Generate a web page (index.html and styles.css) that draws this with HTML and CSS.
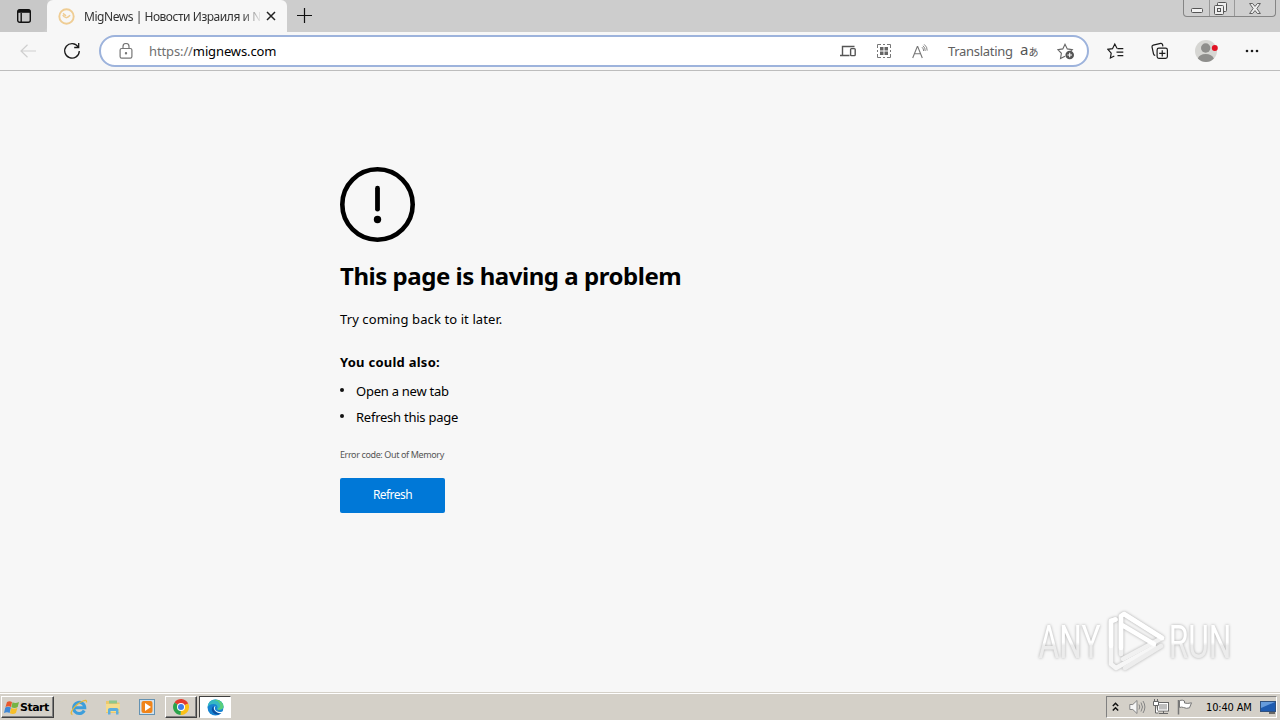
FILE: index.html
```
<!DOCTYPE html>
<html lang="en">
<head>
  <meta charset="UTF-8" />
  <title>MigNews</title>
  <link rel="stylesheet" href="styles.css">
</head>
<body>
  <header class="tabstrip">
    <div class="tab-menu">
      <svg width="16" height="16" viewBox="0 0 16 16" fill="none" stroke="#111" stroke-width="1.4"><rect x="1.7" y="1.7" width="12.6" height="12.6" rx="2"/><path d="M2 3.3h12" stroke-width="3"/><path d="M5.2 5v9"/></svg>
    </div>
    <div class="tab">
      <svg width="17" height="17" viewBox="0 0 17 17" fill="none" stroke="#efcd94"><circle cx="8.5" cy="8.5" r="7.2" stroke-width="1.9"/><path d="M4.8 7c1.500 3.200 4.200 3.700 7.300.3M5 5.400l3 2.400" stroke-width="1.500"/></svg>
      <span class="tab-title">MigNews | Новости Израиля и N</span>
      <svg class="tab-close" width="10" height="10" viewBox="0 0 10 10" stroke="#222" stroke-width="1.5"><path d="M1 1l8 8M9 1L1 9"/></svg>
    </div>
    <svg class="new-tab" width="15" height="15" viewBox="0 0 15 15" stroke="#111" stroke-width="1.2"><path d="M7.5 0v15M0 7.5h15"/></svg>
    <div class="window-buttons">
      <span class="win-min"><svg width="12" height="5" viewBox="0 0 12 5"><rect x=".5" y=".5" width="11" height="4" rx="1" fill="#f2f2f2" stroke="#555"/></svg></span>
      <span class="win-max"><svg width="13" height="13" viewBox="0 0 13 13" fill="#eee" stroke="#555"><rect x="3.5" y=".5" width="9" height="9" rx="1"/><rect x=".5" y="3.5" width="9" height="9" rx="1"/><rect x="3.5" y="6.5" width="3" height="3"/></svg></span>
      <span class="win-close"><svg width="12" height="11" viewBox="0 0 12 11"><path d="M.6.5h3L6 3.4 8.4.5h3L7.900 5.500l3.500 5h-3L6 7.600l-2.400 2.900h-3l3.500-5z" fill="#eee" stroke="#555" stroke-width=".9"/></svg></span>
    </div>
  </header>

  <nav class="toolbar">
    <svg class="back" width="16" height="14" viewBox="0 0 16 14" fill="none" stroke="#cfcfcf" stroke-width="1.2"><path d="M16 7H1M7.5.7L1 7l6.500 6.300"/></svg>
    <svg class="reload" width="18" height="18" viewBox="0 0 18 18" fill="none" stroke="#1b1b1b" stroke-width="1.3"><path d="M15.200 5A7.300 7.300 0 1 0 16.300 9M15.700 1v4.500h-4.500"/></svg>
    <div class="address">
      <svg class="lock" width="14" height="16" viewBox="0 0 14 16" fill="none" stroke="#777" stroke-width="1.2"><rect x="1.100" y="5.500" width="11.800" height="9.600" rx="1.600"/><path d="M4 5.500V3.500a3 3 0 0 1 6 0v2"/><circle cx="7" cy="10.200" r=".6" fill="#777"/></svg>
      <span class="url"><span class="scheme">https://</span>mignews.com</span>
      <svg class="devices" width="16" height="12" viewBox="0 0 16 12" fill="none" stroke="#555" stroke-width="1.4"><path d="M9.500 10.500H0M2.500 10V1.500h12"/><rect x="10.600" y="3.600" width="4.600" height="7" rx=".8"/></svg>
      <svg class="qr" width="14" height="14" viewBox="0 0 14 14" fill="none" stroke="#777"><path d="M.5 4V.5H4M10 .5h3.500V4M13.500 10v3.500H10M4 13.500H.5V10M6 .5h2M6 13.500h2M.5 6v2M13.500 6v2"/><path d="M3 3h3.500v3.500H3zM7.500 3H11v3.500H7.500zM3 7.500h3.500V11H3zM7.500 7.500H11V11H7.500z" fill="#666" stroke="none"/></svg>
      <svg class="read" width="16" height="15" viewBox="0 0 16 15" fill="none" stroke="#777" stroke-width="1.1"><path d="M.7 14L5.300 2.500h.4L10.300 14M2.500 9.700h6"/><path d="M10 3.200q1.700 1.500 1.600 3.800M11 1.800q2.400 2 2.200 5.200M12.200.4q3.200 2.500 3 6.200" stroke-width=".9"/></svg>
      <span class="translating">Translating</span>
      <span class="lang"><span class="lang-a">a</span>あ</span>
      <svg class="fav" width="18" height="18" viewBox="0 0 18 18" fill="none" stroke="#666" stroke-width="1.1"><path d="M8 14.200l-4.500 2.300.9-5.200L.8 7.600l5-.7L8 2.200l2.300 4.700 5 .7-2 2"/><circle cx="12.700" cy="13" r="4.300" fill="#555" stroke="none"/><path d="M12.700 10.700v4.600M10.400 13H15" stroke="#fff"/></svg>
    </div>
    <svg class="favorites" width="18" height="18" viewBox="0 0 18 18" fill="none" stroke="#1b1b1b" stroke-width="1.2"><path d="M7.300 14L3.400 16l.8-4.800L.9 7.300l4.600-.6L7.800 2l2.300 4.500M10.500 6.700h5.800M9.500 10.200h6.800M10.500 13.700h5.800"/></svg>
    <svg class="collections" width="18" height="18" viewBox="0 0 18 18" fill="none" stroke="#1b1b1b" stroke-width="1.2"><path d="M4.200 13.300q-1.400 0-1.700-1.400L1 5Q.8 3.500 2.200 3.100l7.500-1.700q1.400-.2 1.800 1.100l.4 1.900"/><rect x="6.100" y="6.100" width="10.300" height="10.300" rx="1.800"/><path d="M11.250 8.200v6.200M8.200 11.300h6.200"/></svg>
    <svg class="profile" width="24" height="24" viewBox="0 0 24 24"><circle cx="12" cy="12" r="11" fill="#d6d6d3"/><circle cx="11.700" cy="9" r="4.700" fill="#8e8e8c"/><path d="M3.800 19.500Q5.500 15 11.700 15t8.200 4.500Q16.500 23 12 23t-8.200-3.500z" fill="#8e8e8c"/><circle cx="20.800" cy="9" r="3" fill="#e11224"/></svg>
    <svg class="more" width="14" height="4" viewBox="0 0 14 4" fill="#1b1b1b"><circle cx="2" cy="2" r="1.300"/><circle cx="7" cy="2" r="1.300"/><circle cx="12" cy="2" r="1.300"/></svg>
  </nav>

  <main class="page">
    <section class="error">
      <svg class="error-icon" width="75" height="75" viewBox="0 0 75 75"><circle cx="37.500" cy="37.500" r="35.200" fill="none" stroke="#000" stroke-width="4.600"/><path d="M37.500 21.200v21" stroke="#000" stroke-width="4.800" stroke-linecap="round"/><circle cx="37.500" cy="52.500" r="3.700"/></svg>
      <h1>This page is having a problem</h1>
      <p class="hint">Try coming back to it later.</p>
      <h2>You could also:</h2>
      <ul>
        <li>Open a new tab</li>
        <li>Refresh this page</li>
      </ul>
      <p class="code">Error code: Out of Memory</p>
      <button class="refresh">Refresh</button>
    </section>
    <svg class="watermark" width="210" height="70" viewBox="0 0 210 70">
      <defs>
        <linearGradient id="shine" x1="0" y1="0" x2="0" y2="1"><stop offset=".5" stop-color="#fff"/><stop offset=".56" stop-color="#ececec"/></linearGradient>
      </defs>
      <g class="brand" fill="url(#shine)" transform="scale(.69 1)">
        <text x="12.500" y="52">ANY</text>
        <text x="201" y="52">RUN</text>
      </g>
      <g fill="none" stroke="#fff" stroke-width="4.500" stroke-linejoin="round" stroke-linecap="round">
        <path d="M85.500 13.500L81 15v43l5 4 38-21" stroke="#f6f6f6"/>
        <path d="M91 48V10l3-2 38 24-39 21" stroke="#f1f1f1"/>
        <path d="M81 40V15l4.500-1.500M91 42V10l3-2 38 24M92 19l32 19"/>
        <path d="M95 62l36-22" stroke="#ededed"/>
      </g>
    </svg>
  </main>

  <footer class="taskbar">
    <div class="start">
      <svg width="16" height="15" viewBox="0 0 16 15"><path d="M3 2q2.500-1.500 5 0L7 7Q4.500 5.500 1.500 7z" fill="#e8582c"/><path d="M8.500 2.300q2.700 1.600 6.500-.2L13.700 7q-3 1.700-6.300.2z" fill="#75b443"/><path d="M1.300 7.500q2.900-1.400 5.600.1l-1.300 5.300Q3 11.500 0 13z" fill="#3f88d6"/><path d="M7.200 8q2.900 1.400 6.200-.1l-1.500 5.200q-2.800 1.600-6 .2z" fill="#f7bf28"/></svg>
      <span>Start</span>
    </div>
    <svg class="ie" width="18" height="17" viewBox="0 0 18 17" fill="none"><path d="M14.200 11.500A5.600 5.600 0 1 1 14.800 8.800H5" stroke="#3d9edb" stroke-width="3"/><path d="M2.500 15.500Q-.5 15 3 10T13 2q4-2 3.500 1.500" stroke="#e9b937" stroke-width="1.300"/></svg>
    <svg class="explorer" width="16" height="16" viewBox="0 0 16 16"><path d="M1 2h5l1 1.500h7.500V14H1z" fill="#edc86b"/><path d="M4 1.500h8v3H4z" fill="#8fc78b"/><path d="M1 5h14l-.5 8H1z" fill="#f5dc8c"/><path d="M3 15.500V10.500Q3 9 5 9h6.500q2 0 2 1.500v5H11V12H5.500v3.500z" fill="#5daedd"/></svg>
    <svg class="media" width="16" height="16" viewBox="0 0 16 16"><rect x=".5" y=".5" width="15" height="15" fill="#d2e2ed" stroke="#6492b2"/><rect x="2.500" y="2" width="11" height="12" rx="2" fill="#f08419"/><path d="M6 4v8l6-4z" fill="#fff"/></svg>
    <div class="task chrome">
      <svg width="16" height="16" viewBox="0 0 16 16"><path d="M8 8L1.500 3.500A8 8 0 0 1 15.200 4.500z" fill="#e33b2e"/><path d="M8 8l7.200-3.500A8 8 0 0 1 7.500 16z" fill="#fbc116"/><path d="M8 8l-.5 8A8 8 0 0 1 1.500 3.500z" fill="#2aa34a"/><circle cx="8" cy="8" r="4" fill="#fff"/><circle cx="8" cy="8" r="3" fill="#3d7de8"/></svg>
    </div>
    <div class="task edge">
      <svg width="17" height="17" viewBox="0 0 17 17"><circle cx="8.500" cy="8.500" r="8" fill="#1683d2"/><path d="M.6 8Q1.300.8 8.500.5q7.600.5 8 7-.5 3.500-5 3.200-2.200-.3-1-2Q10.500 5 6.500 5T.6 8z" fill="#35b9c3"/><path d="M10 .7q6 1.500 6.500 6.800-.5 3.500-5 3.200l-1-.7q4-1.500 2-5.500T6 2z" fill="#59cf7c"/><path d="M6.500 7Q3.300 10 6 13.500t8.500 1Q10 14.500 8 12T6.500 7z" fill="#0b4f9f"/><path d="M8.500 7q-1.800 3 1 5t7.500.3l-1.300 2.200Q10 14.500 7.800 11.500T8.500 7z" fill="#fff"/></svg>
    </div>
    <div class="tray">
      <svg class="chevrons" width="7" height="10" viewBox="0 0 7 10" fill="none" stroke="#111" stroke-width="1.5"><path d="M.8 4l2.700-2.700L6.200 4M.8 8.500l2.700-2.700 2.700 2.700"/></svg>
      <svg class="volume" width="17" height="16" viewBox="0 0 17 16" fill="none" stroke="#858585"><path d="M.8 5.500h3L8 1.500v13l-4.200-4h-3z" fill="#f6f6f6"/><path d="M10 5.500q1.600 2.500 0 5M12 3.500q3 4.500 0 9M14 2q3.800 6 0 12"/></svg>
      <svg class="network" width="16" height="16" viewBox="0 0 16 16" stroke="#666"><rect x="4.500" y="3.500" width="11" height="8.500" fill="#bdbdbd"/><rect x="5.500" y="4.500" width="9" height="6.500" fill="none" stroke="#fff"/><path d="M6 14.500h9M10.500 12v2"/><path d="M.5 2.500h5v4h-5zM1.500 0v2.500M4.500 0v2.500M2.500 7v7h3" fill="#fff"/></svg>
      <svg class="flag" width="16" height="16" viewBox="0 0 16 16"><path d="M1.500 1v14.500" stroke="#777" stroke-width="1.500"/><path d="M2.500 1.500q3-1 5 .5v2q3 1 7-.2l-2 5q-3 1.200-6-.3-2-.8-4 0z" fill="#fff" stroke="#777"/></svg>
      <span class="clock">10:40 AM</span>
      <svg class="desktop" width="16" height="13" viewBox="0 0 16 13"><rect x=".5" y=".5" width="15" height="10" fill="#1e5bb0" stroke="#30517e"/><path d="M1 1h14L1 7z" fill="#659bdc"/><path d="M9 12h6" stroke="#444" stroke-width="1.5"/></svg>
    </div>
  </footer>
</body>
</html>
```
FILE: styles.css
```
* {
  box-sizing: border-box;
}

body {
  margin: 0;
  width: 1280px;
  height: 720px;
  overflow: hidden;
  display: flex;
  flex-direction: column;
  background: #f7f7f7;
  color: #000;
  font-family: "Noto Sans", sans-serif;
}

svg {
  display: block;
  flex-shrink: 0;
}

/* tabs */
.tabstrip {
  height: 32px;
  display: flex;
  background: #cdcdcd;
}

.tab-menu {
  width: 47px;
  padding: 8px 0 0 16px;
  background: #c8c8c8;
  border-radius: 0 0 6px 0;
}

.tab {
  width: 240px;
  display: flex;
  align-items: center;
  padding-left: 11px;
  background: #f7f7f7;
  border-radius: 6px 6px 0 0;
}

.tab-title {
  width: 176px;
  margin-left: 9px;
  white-space: nowrap;
  font-size: 12px;
  letter-spacing: -0.46px;
  color: #333;
  -webkit-mask-image: linear-gradient(to right, #000 158px, transparent 178px);
  mask-image: linear-gradient(to right, #000 158px, transparent 178px);
}

.tab-close {
  margin-left: 6px;
}

.new-tab {
  margin: 8px 0 0 10px;
}

.window-buttons {
  display: flex;
  width: 93px;
  height: 17px;
  margin: 0 4px 0 auto;
  border: 1px solid #858585;
  border-top: 0;
  border-radius: 0 0 4px 4px;
  background: #cfcfcf;
}

.window-buttons span {
  display: flex;
  justify-content: center;
}

.win-min {
  width: 25px;
  padding-top: 8px;
}

.win-max {
  width: 26px;
  padding: 2px 4px 0 0;
  border-left: 1px solid #999;
  border-right: 1px solid #999;
}

.win-close {
  width: 40px;
  padding-top: 3px;
}

/* toolbar */
.toolbar {
  height: 39px;
  display: flex;
  align-items: center;
  padding-left: 20px;
  border-bottom: 1px solid #bdbdbd;
}

.reload {
  margin-left: 27px;
}

.address {
  width: 990px;
  height: 32px;
  margin-left: 18px;
  display: flex;
  align-items: center;
  border: 2px solid #9db3dc;
  border-radius: 16px;
  background: #fff;
}

.lock {
  margin-left: 18px;
}

.url {
  width: 691px;
  margin-left: 16px;
  font-size: 13px;
  letter-spacing: -0.12px;
}

.scheme {
  color: #707070;
}

.qr {
  margin-left: 21px;
}

.read {
  margin-left: 21px;
}

.translating {
  width: 66px;
  margin-left: 20px;
  font-size: 13px;
  letter-spacing: -0.3px;
  white-space: nowrap;
  color: #606060;
}

.lang {
  width: 20px;
  margin-left: 6px;
  display: flex;
  align-items: center;
  font: 10px "Noto Sans", "Noto Sans CJK JP", sans-serif;
  color: #555;
}

.lang-a {
  margin-top: -5px;
  font-size: 15px;
}

.fav {
  margin-left: 17px;
}

.favorites {
  margin-left: 18px;
}

.collections {
  margin-left: 26px;
}

.profile {
  margin-left: 25px;
}

.more {
  margin-left: 27px;
}

/* error page */
.page {
  flex: 1;
  position: relative;
  padding: 96px 0 0 340px;
}

.error h1 {
  margin: 16px 0 0;
  font-size: 24px;
  line-height: 36px;
  font-weight: 700;
  letter-spacing: -0.46px;
}

.hint {
  margin: 15px 0 0;
  font-size: 13px;
  line-height: 20px;
  letter-spacing: 0.1px;
}

.error h2 {
  margin: 23px 0 0;
  font-size: 13px;
  line-height: 20px;
  letter-spacing: 0.25px;
}

.error ul {
  margin: 6px 0 0;
  padding: 0;
  list-style: none;
}

.error li {
  display: flex;
  font-size: 13px;
  line-height: 26px;
  letter-spacing: -0.25px;
}

.error li::before {
  content: "";
  width: 4px;
  height: 4px;
  margin: 10px 12px 0 0;
  border-radius: 50%;
  background: #111;
}

.code {
  margin: 17px 0 0;
  font-size: 9px;
  line-height: 16px;
  letter-spacing: -0.38px;
  color: #555;
}

.refresh {
  display: block;
  width: 105px;
  height: 35px;
  margin-top: 15px;
  padding: 0 0 2px;
  border: 0;
  border-radius: 2px;
  background: #0078d7;
  color: #fff;
  font: 12px "Noto Sans", sans-serif;
  letter-spacing: -0.55px;
}

/* overlaid on the page corner */
.watermark {
  position: absolute;
  right: 40px;
  bottom: 16px;
  filter: drop-shadow(0 0 1.5px rgba(0, 0, 0, 0.3));
}

.brand {
  font: 46px Roboto, sans-serif;
}

/* taskbar */
.taskbar {
  height: 28px;
  display: flex;
  align-items: center;
  padding: 1px 3px 0 1px;
  border-top: 1px solid #d4d0c8;
  box-shadow: inset 0 1px #fff;
  background: #d4d0c8;
}

.start {
  width: 53px;
  height: 22px;
  display: flex;
  align-items: center;
  padding-left: 2px;
  border: 1px solid;
  border-color: #fff #404040 #404040 #fff;
  box-shadow: inset -1px -1px #808080;
  font: bold 11px "DejaVu Sans", sans-serif;
  letter-spacing: -0.5px;
}

.ie {
  margin-left: 16px;
}

.explorer {
  margin-left: 17px;
}

.media {
  margin-left: 18px;
}

.task {
  width: 32px;
  height: 22px;
  display: flex;
  align-items: center;
  justify-content: center;
  border: 1px solid;
}

.chrome {
  margin-left: 10px;
  border-color: #fff #404040 #404040 #fff;
  box-shadow: inset -1px -1px #808080;
}

.edge {
  margin-left: 2px;
  border-color: #404040 #fff #fff #404040;
  background: #fff;
}

.tray {
  width: 171px;
  height: 22px;
  margin-left: auto;
  display: flex;
  align-items: center;
  padding-left: 5px;
  border: 1px solid;
  border-color: #808080 #fff #fff #808080;
}

.volume {
  margin-left: 10px;
}

.network {
  margin-left: 7px;
}

.flag {
  margin-left: 8px;
}

.clock {
  width: 47px;
  margin-left: 13px;
  font: 11px "DejaVu Sans Condensed", "DejaVu Sans", sans-serif;
  letter-spacing: -0.15px;
  white-space: nowrap;
}

.desktop {
  margin-left: 7px;
}
```
